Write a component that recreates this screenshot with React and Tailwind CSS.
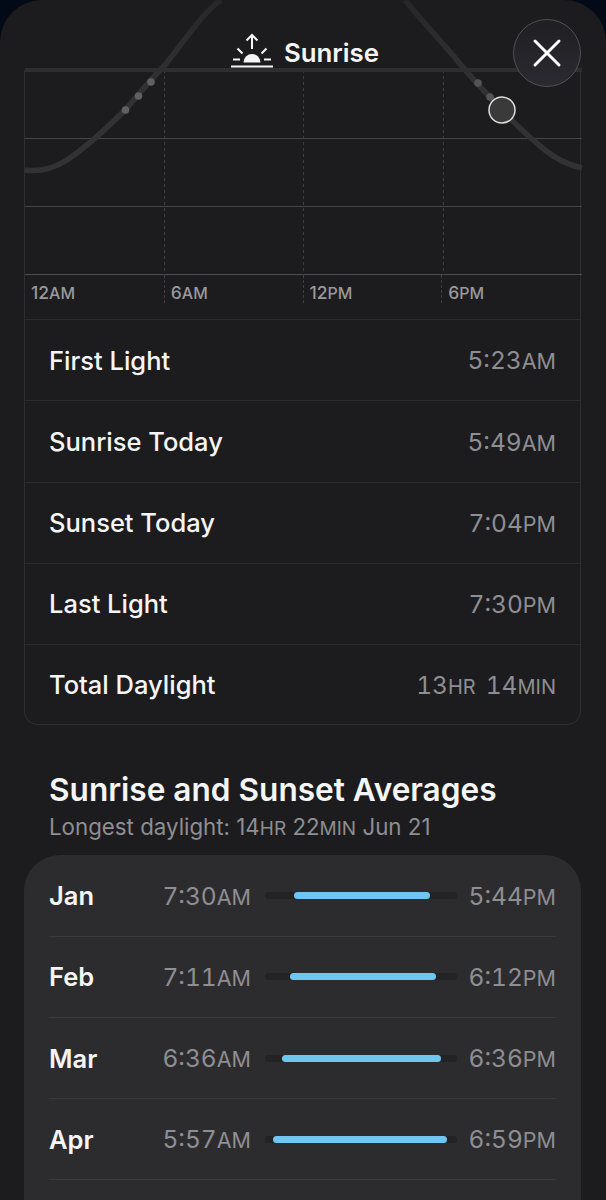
import React from 'react'

const dayRows = [
  { label: 'First Light', value: [['5:23', 'AM']] },
  { label: 'Sunrise Today', value: [['5:49', 'AM']] },
  { label: 'Sunset Today', value: [['7:04', 'PM']] },
  { label: 'Last Light', value: [['7:30', 'PM']] },
  { label: 'Total Daylight', value: [['13', 'HR'], ['14', 'MIN']] },
]

const months = [
  { name: 'Jan', rise: '7:30', set: '5:44', bar: 'ml-[29px] w-[136px]' },
  { name: 'Feb', rise: '7:11', set: '6:12', bar: 'ml-[25px] w-[146px]' },
  { name: 'Mar', rise: '6:36', set: '6:36', bar: 'ml-[17px] w-[159px]' },
  { name: 'Apr', rise: '5:57', set: '6:59', bar: 'ml-[8px] w-[174px]' },
]

const hours = [['12', 'AM'], ['6', 'AM'], ['12', 'PM'], ['6', 'PM']]

const Time = ({ num, unit }) => (
  <span className="text-[24.5px] leading-none tabular-nums">
    {num}
    <span className={unit === 'HR' || unit === 'MIN' ? 'text-[20px]' : 'text-[21.5px]'}>{unit}</span>
  </span>
)

const SunriseIcon = () => (
  <svg width="44" height="36" viewBox="0 0 44 36" fill="none" stroke="#f5f5f5" strokeWidth="2" strokeLinecap="butt">
    <path d="M1 33.5H43" strokeWidth="2.2" />
    <path d="M13.5 29.5a8.5 8.5 0 0 1 17 0Z" fill="#f5f5f5" stroke="none" />
    <path d="M3 26.5H10M34 26.5H41" />
    <path d="M7.5 15.5L12.5 20.5M36.5 15.5L31.5 20.5" />
    <path d="M22 16V2M16.5 7.5L22 2L27.5 7.5" />
  </svg>
)

// curve goes above the plot, so the svg is left to overflow
const Chart = () => (
  <svg width="557" height="205" viewBox="0 0 557 205" fill="none" className="block overflow-visible">
    <defs>
      <linearGradient id="curve" gradientUnits="userSpaceOnUse" x1="0" y1="-70" x2="0" y2="20">
        <stop offset="0" stopColor="#272729" />
        <stop offset="1" stopColor="#323234" />
      </linearGradient>
    </defs>
    <path d="M0 68.5H557M0 136.5H557" stroke="#454547" />
    <path d="M0 204.5H557" stroke="#4c4c4e" />
    <path d="M139.5 0V205M278.5 0V205M418.5 0V205" stroke="#3e3e40" strokeDasharray="3 3" />
    <path
      d="M0 100C14 102 28 99 42 90C60 78 82 58 100 40C112 27 122 13 140 -5C160 -30 180 -60 196 -70"
      stroke="url(#curve)"
      strokeWidth="5.5"
      className="blur-[0.5px]"
    />
    <path
      d="M380 -70C400 -45 420 -25 436 -5C450 12 465 27 477 40C490 54 505 68 520 80C532 90 544 95 557 98"
      stroke="url(#curve)"
      strokeWidth="5.5"
      className="blur-[0.5px]"
    />
    <path d="M0 0H557" stroke="#2e2e30" strokeWidth="4" className="blur-[0.5px]" />
    <circle cx="100.5" cy="40" r="3.8" fill="#606062" className="blur-[0.5px]" />
    <circle cx="113.5" cy="26" r="3.8" fill="#606062" className="blur-[0.5px]" />
    <circle cx="126" cy="12" r="3.8" fill="#606062" className="blur-[0.5px]" />
    <circle cx="453" cy="13" r="3.8" fill="#545456" className="blur-[0.5px]" />
    <circle cx="465" cy="27" r="3.8" fill="#545456" className="blur-[0.5px]" />
    <circle cx="477" cy="40" r="13" fill="#3a3a3a" stroke="#dcdcdc" strokeWidth="1.5" />
  </svg>
)

const App = () => {
  return (
    <div className="w-[606px] h-[1200px] overflow-hidden bg-[#020a18] font-['Inter',sans-serif] antialiased">
      <div className="relative h-full rounded-t-[42px] bg-[#1c1c1e] pl-6 pr-[25px] pt-[70px]">
        <div className="absolute left-[230px] top-[33px] flex items-center gap-[10px]">
          <SunriseIcon />
          <span className="mt-[4px] text-[25.8px] font-semibold leading-none text-[#f5f5f5]">Sunrise</span>
        </div>
        <button className="absolute left-[513px] top-[19px] flex h-[68px] w-[68px] items-center justify-center rounded-full border border-[#505055] bg-linear-to-b from-[#1f1f23] to-[#2a2a30]">
          <svg width="30" height="30" viewBox="0 0 30 30" fill="none" stroke="#ffffff" strokeWidth="3" strokeLinecap="round">
            <path d="M3 3L27 27M27 3L3 27" />
          </svg>
        </button>

        <div className="w-[557px] rounded-b-[14px] border-x border-b border-[#2e2e30]">
          <Chart />
          <div className="grid h-[44px] grid-cols-4">
            {hours.map(([num, unit], i) => (
              <div
                key={i}
                className={`h-[28px] pl-[6px] pt-[8px] text-[#98989d] font-medium leading-[20px] ${i > 0 ? 'border-l border-dashed border-[#3e3e40]' : ''}`}
              >
                <span className="text-[17.5px]">{num}</span>
                <span className="text-[16px]">{unit}</span>
              </div>
            ))}
          </div>
          {dayRows.map(row => (
            <div key={row.label} className="flex h-[81.3px] items-center justify-between border-t border-[#2c2c2e] pl-[24px] pr-[24px] pt-[1px] last:h-[80px]">
              <span className="text-[25.5px] font-medium text-[#f5f5f5]">{row.label}</span>
              <span className="flex gap-[10px] text-[#8e8e93]">
                {row.value.map(([num, unit]) => (
                  <Time key={unit} num={num} unit={unit} />
                ))}
              </span>
            </div>
          ))}
        </div>

        <h2 className="mt-[44px] pl-[25px] text-[31.6px] font-semibold leading-[42px] text-[#f5f5f5]">Sunrise and Sunset Averages</h2>
        <p className="pl-[25px] text-[22.3px] leading-[32px] text-[#8e8e93]">
          Longest daylight: 14<span className="text-[19px]">HR</span> 22<span className="text-[19px]">MIN</span> Jun 21
        </p>

        <div className="mt-[10px] w-[557px] rounded-t-[36px] bg-[#2c2c2e] pl-[25px] pr-[25px] pt-[0.5px] pb-8">
          {months.map(m => (
            <div key={m.name} className="flex h-[81.2px] items-center border-b border-[#3a3a3c]">
              <span className="w-[100px] shrink-0 pt-[1px] text-[25.5px] font-semibold text-[#f5f5f5]">{m.name}</span>
              <span className="w-[102px] shrink-0 pt-[3px] text-right text-[#8e8e93]">
                <Time num={m.rise} unit="AM" />
              </span>
              <div className="ml-[14px] mr-[10px] h-[7px] w-[192px] shrink-0 rounded-full bg-[#232325]">
                <div className={`h-full rounded-full bg-[#6ec6f2] ${m.bar}`} />
              </div>
              <span className="flex-1 pt-[3px] text-right whitespace-nowrap text-[#8e8e93]">
                <Time num={m.set} unit="PM" />
              </span>
            </div>
          ))}
        </div>
      </div>
    </div>
  )
}

export default App
